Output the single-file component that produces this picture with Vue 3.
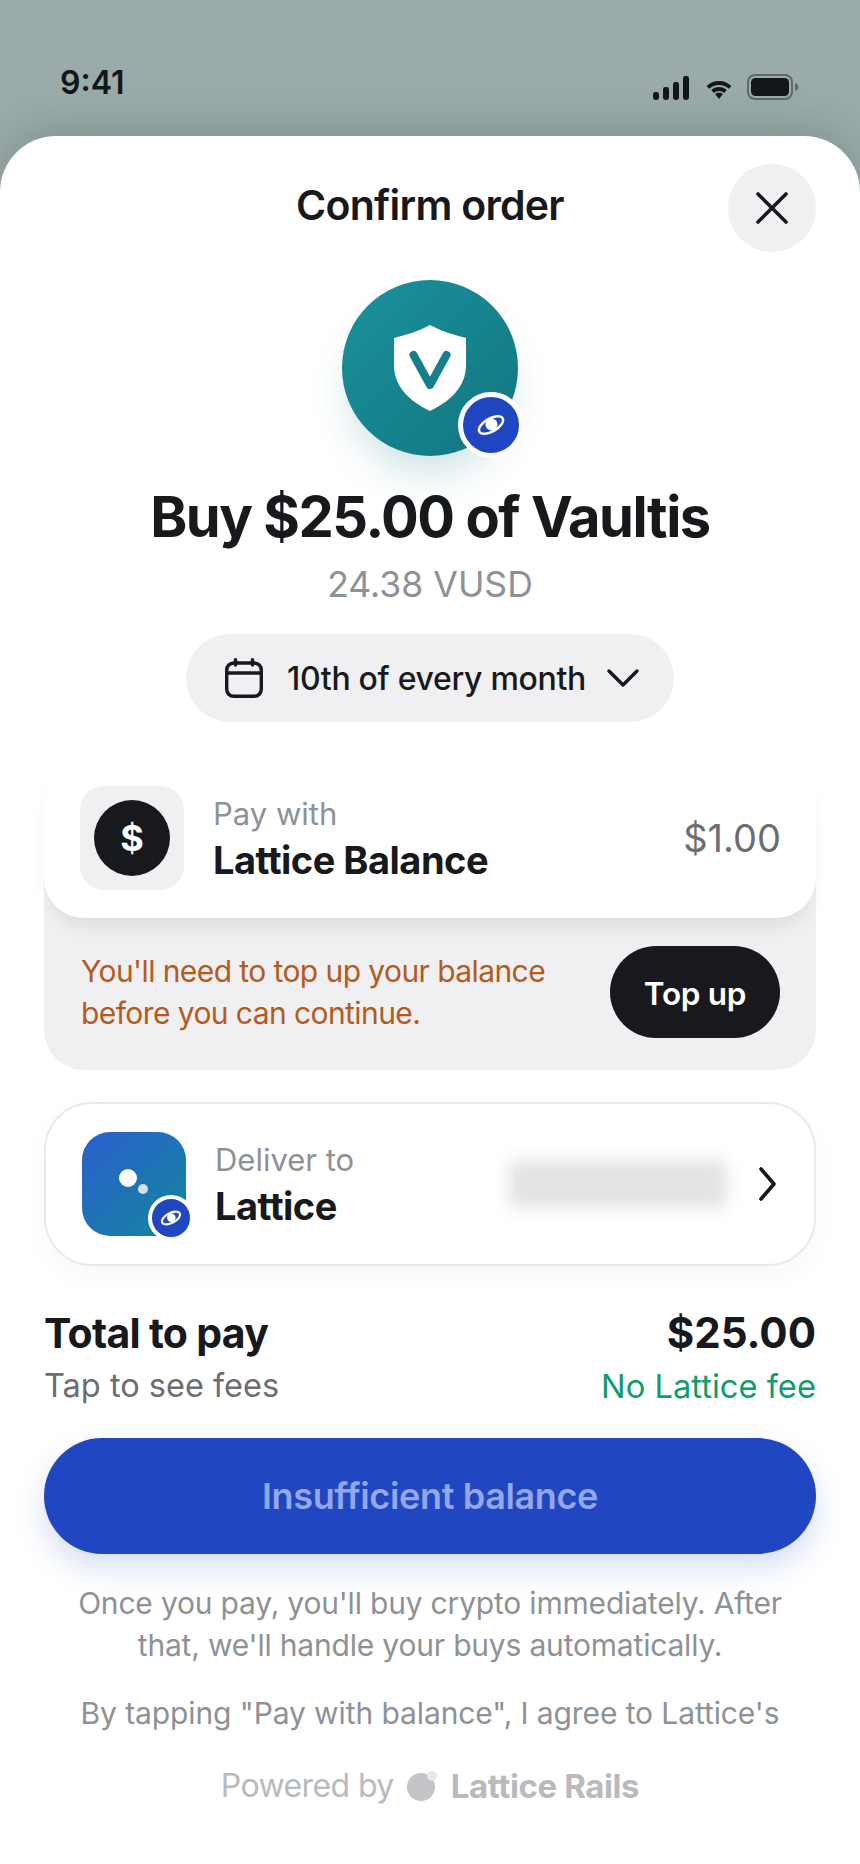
<script setup>
</script>

<template>
  <div class="screen">
    <div class="status">
      <span class="time">9:41</span>
      <div class="status-icons">
        <svg class="signal" width="36" height="24" viewBox="0 0 36 24">
          <rect x="0" y="16" width="6" height="8" rx="2.4" />
          <rect x="10" y="11" width="6" height="13" rx="2.4" />
          <rect x="20" y="6" width="6" height="18" rx="2.4" />
          <rect x="30" y="0" width="6" height="24" rx="2.4" />
        </svg>
        <svg class="wifi" width="26" height="18" viewBox="0 0 26 18">
          <path d="M13 0C8.2 0 3.8 1.9.6 5l2.5 2.8C5.700 5.400 9.200 3.900 13 3.900s7.300 1.500 9.900 3.900L25.400 5C22.200 1.900 17.800 0 13 0Z" />
          <path d="M13 6.100c-3 0-5.700 1.100-7.700 3l2.500 2.800c1.400-1.200 3.200-2 5.200-2s3.800.8 5.200 2l2.500-2.800c-2-1.900-4.700-3-7.700-3Z" />
          <path d="M13 11.800c-1.500 0-2.800.5-3.800 1.400L13 18l3.800-4.800c-1-.9-2.300-1.400-3.800-1.400Z" />
        </svg>
        <svg class="battery" width="52" height="26" viewBox="0 0 52 26">
          <rect x="1" y="1" width="44" height="24" rx="7" fill="none" stroke="#5f6a6a" stroke-width="2" />
          <rect x="4" y="4" width="38" height="18" rx="4.500" fill="#14171a" />
          <path d="M48 9c2 .6 3.500 2 3.500 4s-1.500 3.400-3.500 4Z" fill="#5f6a6a" />
        </svg>
      </div>
    </div>

    <main class="sheet">
      <header class="sheet-head">
        <h1 class="sheet-title">Confirm order</h1>
        <button class="close" aria-label="Close">
          <svg width="36" height="36" viewBox="0 0 36 36" fill="none" stroke="#17191c" stroke-width="3.600" stroke-linecap="round">
            <path d="M4 4 32 32M32 4 4 32" />
          </svg>
        </button>
      </header>

      <div class="logo">
        <svg width="72" height="86" viewBox="0 0 72 86">
          <path d="M36 0 C47 6 60 10 72 13 V40 C72 61 57 76 36 86 C15 76 0 61 0 40 V13 C12 10 25 6 36 0Z" fill="#fff" />
          <path d="M19.500 30 36 60 52.500 30" fill="none" stroke="#167f8b" stroke-width="8" stroke-linecap="round" stroke-linejoin="round" />
        </svg>
        <span class="net-badge net-badge-lg">
          <svg width="34" height="34" viewBox="0 0 34 34">
            <ellipse cx="17" cy="17" rx="13.500" ry="6.500" transform="rotate(-30 17 17)" fill="none" stroke="#fff" stroke-width="2.400" />
            <circle cx="17.500" cy="16.500" r="6" fill="#fff" />
          </svg>
        </span>
      </div>

      <h2 class="buy">Buy $25.00 of Vaultis</h2>
      <p class="qty">24.38 VUSD</p>

      <button class="schedule">
        <svg width="38" height="40" viewBox="0 0 38 40" fill="none" stroke="#17191c" stroke-width="3.400" stroke-linecap="round" stroke-linejoin="round">
          <rect x="1.700" y="5" width="34.600" height="33.300" rx="7" />
          <path d="M1.700 15h34.600M10.500 1.700V7M27.500 1.700V7" />
        </svg>
        <span class="schedule-text">10th of every month</span>
        <svg class="schedule-chev" width="32" height="20" viewBox="0 0 32 20" fill="none" stroke="#17191c" stroke-width="3.400" stroke-linecap="round" stroke-linejoin="round">
          <path d="M2 3 16 17 30 3" />
        </svg>
      </button>

      <section class="pay">
        <div class="pay-top">
          <div class="tile-gray">
            <span class="dollar">$</span>
          </div>
          <div class="labels">
            <span class="label">Pay with</span>
            <strong class="value">Lattice Balance</strong>
          </div>
          <span class="balance">$1.00</span>
        </div>
        <div class="pay-bottom">
          <p class="warn">You'll need to top up your balance<br />before you can continue.</p>
          <button class="topup">Top up</button>
        </div>
      </section>

      <section class="deliver">
        <div class="tile-blue">
          <i class="dot-a"></i>
          <i class="dot-b"></i>
          <span class="net-badge net-badge-sm">
            <svg width="24" height="24" viewBox="0 0 34 34">
              <ellipse cx="17" cy="17" rx="14" ry="7" transform="rotate(-28 17 17)" fill="none" stroke="#fff" stroke-width="3" />
              <circle cx="17.500" cy="16.500" r="6" fill="#fff" />
            </svg>
          </span>
        </div>
        <div class="labels labels-deliver">
          <span class="label">Deliver to</span>
          <strong class="value">Lattice</strong>
        </div>
        <div class="redacted"></div>
        <svg class="chev" width="17" height="34" viewBox="0 0 17 34" fill="none" stroke="#17191c" stroke-width="3.600" stroke-linecap="round" stroke-linejoin="round">
          <path d="M2 2 15 17 2 32" />
        </svg>
      </section>

      <section class="total">
        <div class="total-row">
          <strong class="total-label">Total to pay</strong>
          <strong class="total-amount">$25.00</strong>
        </div>
        <div class="total-row total-row-sub">
          <span class="fees">Tap to see fees</span>
          <span class="nofee">No Lattice fee</span>
        </div>
      </section>

      <button class="cta">Insufficient balance</button>

      <p class="note">Once you pay, you'll buy crypto immediately. After that, we'll handle your buys automatically.</p>
      <p class="note note-agree">By tapping "Pay with balance", I agree to Lattice's</p>

      <footer class="powered">
        <span class="powered-by">Powered by</span>
        <svg class="powered-mark" width="30" height="30" viewBox="0 0 30 30">
          <circle cx="14" cy="16" r="14" fill="#c3c5c9" />
          <circle cx="25" cy="5" r="5" fill="#e6e7e9" />
        </svg>
        <strong>Lattice Rails</strong>
      </footer>
    </main>
  </div>
</template>

<style>
html, body { margin: 0; background: #fff; }
</style>

<style scoped>
.screen {
  width: 860px;
  height: 1864px;
  overflow: hidden;
  display: flex;
  flex-direction: column;
  background: #9aabaa;
  font-family: Inter, "Noto Sans", sans-serif;
  color: #17191c;
}
.status {
  height: 136px;
  flex: none;
  box-sizing: border-box;
  padding: 65px 61px 0 60px;
  display: flex;
  justify-content: space-between;
  align-items: flex-start;
}
.time {
  font-size: 32px;
  line-height: 36px;
  font-weight: 600;
  color: #14171a;
}
.status-icons {
  display: flex;
  align-items: flex-start;
  padding-top: 9px;
}
.signal { fill: #14171a; margin-top: 2px; }
.wifi { fill: #14171a; margin: 7px 0 0 17px; }
.battery { margin-left: 15px; }

.sheet {
  flex: 1;
  background: #fff;
  border-radius: 56px 56px 0 0;
  box-shadow: 0 -8px 40px rgba(40, 55, 55, 0.2);
  padding: 0 44px;
  display: flex;
  flex-direction: column;
  align-items: stretch;
}
.sheet-head {
  position: relative;
  padding-top: 28px;
  height: 88px;
  display: flex;
  justify-content: center;
  align-items: center;
}
.sheet-title {
  margin: 0;
  font-size: 41px;
  line-height: 48px;
  font-weight: 600;
  letter-spacing: -0.75px;
  position: relative;
  top: -3px;
}
.close {
  position: absolute;
  right: 0;
  top: 28px;
  width: 88px;
  height: 88px;
  border: 0;
  border-radius: 50%;
  background: #f0f0f2;
  padding: 0;
  display: flex;
  align-items: center;
  justify-content: center;
}
.logo {
  position: relative;
  margin: 28px auto 0;
  width: 176px;
  height: 176px;
  border-radius: 50%;
  background: linear-gradient(135deg, #1a919c, #127680);
  box-shadow: 0 26px 40px -10px rgba(20, 125, 135, 0.22);
  display: flex;
  align-items: center;
  justify-content: center;
}
.net-badge {
  position: absolute;
  box-sizing: content-box;
  border-radius: 50%;
  background: #2146c2;
  border: solid #fff;
  display: flex;
  align-items: center;
  justify-content: center;
}
.net-badge-lg {
  width: 56px;
  height: 56px;
  border-width: 5px;
  left: 116px;
  top: 112px;
}
.net-badge-sm {
  width: 38px;
  height: 38px;
  border-width: 4px;
  left: 66px;
  top: 63px;
}
.buy {
  margin: 27px 0 0;
  text-align: center;
  font-size: 56px;
  line-height: 68px;
  font-weight: 700;
  letter-spacing: -1.45px;
}
.qty {
  margin: 12px 0 0;
  text-align: center;
  font-size: 35.6px;
  line-height: 44px;
  color: #8e9196;
}
.schedule {
  margin: 27px auto 0;
  width: 488px;
  height: 88px;
  border: 0;
  border-radius: 44px;
  background: #f0f0f2;
  display: flex;
  align-items: center;
  justify-content: flex-start;
  padding: 0 0 0 39px;
  font: 500 32px/40px Inter, sans-serif;
  letter-spacing: -0.31px;
  color: #17191c;
}
.schedule-text { margin: 2px 0 0 24px; }
.schedule-chev { margin-left: 21px; }
.pay {
  margin-top: 36px;
  background: #f0f0f2;
  border-radius: 40px;
}
.pay-top {
  height: 160px;
  box-sizing: border-box;
  padding: 0 35px 0 36px;
  background: #fff;
  border-radius: 40px;
  box-shadow: 0 14px 24px -12px rgba(20, 22, 26, 0.14);
  display: flex;
  align-items: center;
}
.tile-gray {
  width: 104px;
  height: 104px;
  flex: none;
  border-radius: 24px;
  background: #f0f0f2;
  display: flex;
  align-items: center;
  justify-content: center;
}
.dollar {
  width: 76px;
  height: 76px;
  border-radius: 50%;
  background: #17191c;
  color: #fff;
  font-size: 36px;
  font-weight: 700;
  display: flex;
  align-items: center;
  justify-content: center;
}
.labels {
  margin-left: 29px;
  display: flex;
  flex-direction: column;
  gap: 3px;
}
.labels-deliver { margin-left: 29px; }
.label {
  font-size: 31px;
  line-height: 40px;
  color: #8e9196;
}
.value {
  font-size: 38px;
  line-height: 46px;
  font-weight: 700;
  letter-spacing: -0.5px;
}
.balance {
  margin-left: auto;
  font-size: 38px;
  line-height: 44px;
  color: #6b6e73;
}
.pay-bottom {
  height: 152px;
  box-sizing: border-box;
  padding: 28px 36px 32px 37px;
  display: flex;
  align-items: center;
  justify-content: space-between;
}
.warn {
  margin: 0;
  font-size: 30px;
  line-height: 42px;
  letter-spacing: -0.58px;
  color: #b45a1e;
}
.topup {
  width: 170px;
  height: 92px;
  border: 0;
  border-radius: 46px;
  background: #17191c;
  color: #fff;
  padding: 3px 0 0;
  font: 600 31.5px/40px Inter, sans-serif;
  letter-spacing: -0.3px;
}
.deliver {
  margin-top: 32px;
  height: 164px;
  box-sizing: border-box;
  border: 2px solid #e8e9eb;
  border-radius: 48px;
  padding: 0 38px 0 36px;
  box-shadow: 0 10px 28px rgba(20, 22, 26, 0.03);
  display: flex;
  align-items: center;
}
.tile-blue {
  position: relative;
  width: 104px;
  height: 104px;
  flex: none;
  border-radius: 28px;
  background: linear-gradient(135deg, #2a5fd0, #14879a);
}
.dot-a {
  position: absolute;
  left: 37px;
  top: 37px;
  width: 18px;
  height: 18px;
  border-radius: 50%;
  background: #fff;
}
.dot-b {
  position: absolute;
  left: 56px;
  top: 52px;
  width: 10px;
  height: 10px;
  border-radius: 50%;
  background: #cfe2f2;
}
.redacted {
  margin-left: auto;
  width: 218px;
  height: 48px;
  border-radius: 6px;
  background: #e3e3e6;
  filter: blur(8px);
}
.chev { margin-left: 32px; flex: none; }
.total { margin-top: 41px; }
.total-row {
  display: flex;
  justify-content: space-between;
  align-items: center;
}
.total-row-sub { margin-top: 5px; }
.total-label {
  font-size: 41px;
  line-height: 52px;
  font-weight: 700;
  letter-spacing: -0.7px;
}
.total-amount {
  font-size: 42px;
  line-height: 52px;
  font-weight: 700;
}
.fees {
  font-size: 32.5px;
  line-height: 44px;
  color: #6b6e73;
}
.nofee {
  font-size: 32.7px;
  line-height: 44px;
  color: #0f9d6b;
}
.cta {
  margin-top: 30px;
  height: 116px;
  border: 0;
  border-radius: 58px;
  background: #2146c2;
  box-shadow: 0 14px 30px rgba(33, 70, 194, 0.18);
  color: #93a7ea;
  padding: 0;
  font: 600 36px/44px Inter, sans-serif;
  letter-spacing: -0.36px;
}
.note {
  margin: 28px 16px 0;
  text-align: center;
  font-size: 30px;
  line-height: 42px;
  letter-spacing: -0.19px;
  color: #8e9196;
}
.note-agree { margin-top: 26px; letter-spacing: -0.1px; }
.powered {
  margin-top: 30px;
  display: flex;
  justify-content: center;
  align-items: center;
  font-size: 32px;
  line-height: 44px;
  color: #b8babe;
}
.powered-by { letter-spacing: -0.6px; }
.powered-mark { margin: 0 14px 0 13px; }
.powered strong { font-size: 33px; font-weight: 700; letter-spacing: -0.4px; }
</style>
